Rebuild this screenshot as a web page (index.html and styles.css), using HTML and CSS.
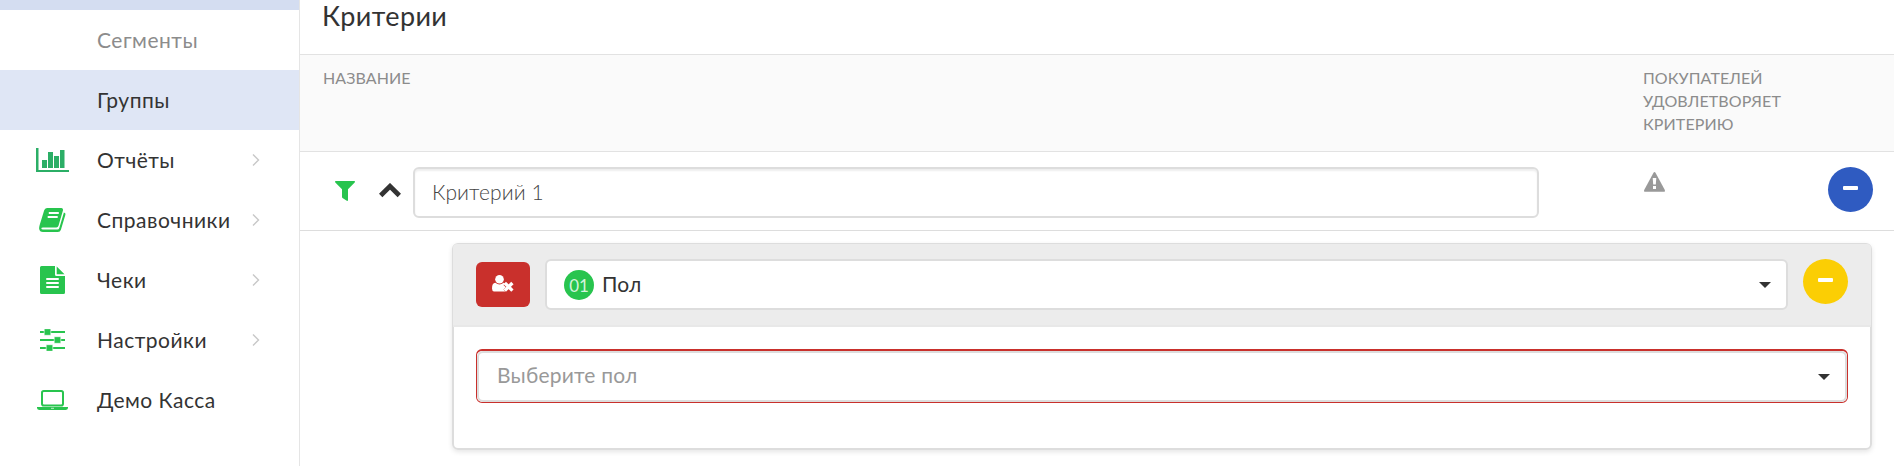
FILE: index.html
```html
<!DOCTYPE html>
<html lang="ru">
<head>
  <meta charset="UTF-8" />
  <meta name="viewport" content="width=device-width, initial-scale=1.0" />
  <title>Критерии</title>
  <link rel="stylesheet" href="styles.css">
</head>
<body>
  <nav class="sidebar">
    <div class="menu-top"></div>
    <a class="menu-item muted"><span class="label">Сегменты</span></a>
    <a class="menu-item active"><span class="label">Группы</span></a>
    <a class="menu-item">
      <svg class="icon" width="33" height="24" viewBox="0 0 33 24" fill="#2bae66"><path d="M0 0h2.500v22h30.500v2h-33zM6 12h5v8h-5zM12 4h5v16h-5zM18 8h5v12h-5zM24 2h4.500v18h-4.500z"/></svg>
      <span class="label">Отчёты</span>
      <svg class="arrow" width="8" height="12" viewBox="0 0 8 12"><path d="M1 .5l5.500 5.500-5.500 5.500"/></svg>
    </a>
    <a class="menu-item">
      <svg class="icon" width="27" height="24" viewBox="0 0 27 24"><path fill="#28c44e" d="M8 0h14.500q2 .2 1.500 2.200l-4.500 15.500q-.5 1.700-2.200 1.700H4q-1.800 0-1.700 1.200.2 1 1.700 1h14.500q1.300 0 1.800-1.500L24.900 4.500q2 .5 1.500 2.200l-4.500 15.100q-.7 2.200-3 2.200H4q-3.500 0-3.900-3.500 0-1.500.5-3.200L5.200 2.200Q5.800.2 8 0z"/><path stroke="#fff" stroke-width="1.800" d="M9.800 5h10M8.700 9h10"/></svg>
      <span class="label">Справочники</span>
      <svg class="arrow" width="8" height="12" viewBox="0 0 8 12"><path d="M1 .5l5.500 5.500-5.500 5.500"/></svg>
    </a>
    <a class="menu-item">
      <svg class="icon" width="25" height="28" viewBox="0 0 25 28"><path fill="#28c44e" d="M1.500 0H15v8.500q0 1.500 1.500 1.500H25v16.500q0 1.500-1.500 1.500h-22Q0 28 0 26.500v-25Q0 0 1.500 0zM16.700.5l7.800 7.800h-7.800z"/><path stroke="#fff" stroke-width="2" stroke-linecap="round" d="M7 13h11M7 17h11M7 21h11"/></svg>
      <span class="label">Чеки</span>
      <svg class="arrow" width="8" height="12" viewBox="0 0 8 12"><path d="M1 .5l5.500 5.500-5.500 5.500"/></svg>
    </a>
    <a class="menu-item">
      <svg class="icon" width="25" height="22" viewBox="0 0 25 22" fill="#28c44e"><path d="M0 2h25v2H0zM0 10h25v2H0zM0 18h25v2H0z"/><path stroke="#fff" stroke-width=".6" d="M4.200-.3h6.600v6.600h-6.600zM14.200 7.700h6.600v6.600h-6.600zM6.200 15.700h6.600v6.600h-6.600z"/></svg>
      <span class="label">Настройки</span>
      <svg class="arrow" width="8" height="12" viewBox="0 0 8 12"><path d="M1 .5l5.500 5.500-5.500 5.500"/></svg>
    </a>
    <a class="menu-item">
      <svg class="icon" width="31" height="20" viewBox="0 0 31 20"><rect x="5" y="1" width="21" height="14.500" rx="1.800" fill="none" stroke="#28c44e" stroke-width="2"/><path fill="#28c44e" d="M0 17h31v1q-.3 2-2.500 2h-26Q.3 20 0 18z"/><path stroke="#fff" stroke-width=".7" d="M14 18.300h3"/></svg>
      <span class="label">Демо Касса</span>
    </a>
  </nav>

  <main class="content">
    <h1>Критерии</h1>
    <div class="table-head">
      <div class="col-name">Название</div>
      <div class="col-count">Покупателей удовлетворяет критерию</div>
    </div>

    <div class="criterion">
      <svg class="filter" width="20" height="20" viewBox="0 0 20 20"><path fill="#28c44e" d="M.5 0h19q.8.500.2 1.500L13 8.200v11q-.3 1-1.200.6L7.500 17q-.5-.4-.5-1V8.200L.3 1.500Q-.2.500.5 0z"/></svg>
      <svg class="toggle" width="22" height="15" viewBox="0 0 22 15"><path fill="none" stroke="#333" stroke-width="4.800" d="M1.700 12.500L11 3.300l9.300 9.200"/></svg>
      <input class="field" type="text" value="Критерий 1">
      <div class="warning">
        <svg width="21" height="20" viewBox="0 0 21 20"><path fill="#999" d="M9.500.8q1-1.500 2 0l9.200 17q.8 2-.9 2H1.200q-1.700 0-.9-2z"/><path fill="#fff" d="M8.700 6h3.600l-.5 6.500H9.200zM9 14h3v3H9z"/></svg>
      </div>
      <button class="round blue"><span></span></button>
    </div>

    <section class="card">
      <div class="card-head">
        <button class="exclude">
          <svg width="22" height="17" viewBox="0 0 22 17"><path fill="#fff" d="M2 16.500Q0 16 0 13.500 0 8 3.300 7.800 5.500 9.500 7.500 9.500t4.200-1.700l1.300.5-1.500 1.600 2.300 2.300-2.300 2.300 1.800 2z"/><circle cx="7.500" cy="4.300" r="4.300" fill="#fff"/><path stroke="#fff" stroke-width="3.300" d="M12.800 8l7.600 7.600M20.400 8l-7.600 7.600"/></svg>
        </button>
        <div class="field select">
          <span class="badge">01</span>
          <span class="value">Пол</span>
          <i class="caret"></i>
        </div>
        <button class="round yellow"><span></span></button>
      </div>
      <div class="card-body">
        <div class="invalid">
          <div class="field select">
            <span class="placeholder">Выберите пол</span>
            <i class="caret"></i>
          </div>
        </div>
      </div>
    </section>
  </main>
</body>
</html>
```
FILE: styles.css
```css
* {
  box-sizing: border-box;
}
body {
  margin: 0;
  height: 466px;
  display: flex;
  overflow: hidden;
  background: #fff;
  color: #333;
  font-family: Lato, "Open Sans", sans-serif;
  font-size: 21px;
}
button {
  border: none;
  padding: 0;
  cursor: pointer;
}
.sidebar {
  width: 300px;
  flex: none;
  border-right: 1px solid #e5e5e5;
}
.menu-top {
  height: 10px;
  background: #d4ddf1;
}
.menu-item {
  height: 60px;
  display: grid;
  grid-template-columns: 105px 1fr 47px;
  align-items: center;
}
.menu-item .icon {
  grid-column: 1;
  justify-self: center;
}
.menu-item .label {
  grid-column: 2;
  margin-left: -8px;
  padding-bottom: 2px;
  letter-spacing: .5px;
  white-space: nowrap;
}
.arrow path {
  fill: none;
  stroke: #c8c8c8;
  stroke-width: 1.4;
}
.muted {
  color: #8c8c8c;
}
.active {
  background: #dfe6f5;
}
.content {
  flex: 1;
  min-width: 0;
}
h1 {
  margin: 0;
  height: 54px;
  padding-left: 22px;
  font-size: 27px;
  font-weight: 400;
  line-height: 31px;
  letter-spacing: .4px;
}
.table-head {
  height: 98px;
  padding: 11px 23px;
  display: flex;
  background: #fafafa;
  border-top: 1px solid #e2e2e2;
  border-bottom: 1px solid #e2e2e2;
  color: #8c8c8c;
  font-size: 16px;
  line-height: 23px;
  letter-spacing: .1px;
  text-transform: uppercase;
}
.col-name {
  width: 1320px;
  flex: none;
}
.col-count {
  width: 150px;
}
.criterion {
  height: 79px;
  padding: 15px 21px 0 35px;
  display: flex;
  align-items: flex-start;
  border-bottom: 1px solid #ddd;
}
.filter {
  margin-top: 14px;
}
.toggle {
  margin: 16px 12px 0 24px;
}
.field {
  height: 51px;
  border: 2px solid #ddd;
  border-radius: 6px;
  background: #fff;
  font: inherit;
  color: #333;
}
input.field {
  width: 1126px;
  padding: 0 17px 2px;
  font-weight: 300;
  letter-spacing: .1px;
  color: #444;
  box-shadow: inset 0 2px 2px #eee;
}
.warning {
  margin: 4px auto 0 105px;
}
.round {
  width: 45px;
  height: 45px;
  flex: none;
  border-radius: 50%;
  display: flex;
  justify-content: center;
  padding-top: 19px;
}
.round span {
  width: 15px;
  height: 4px;
  border-radius: 1px;
  background: #fff;
}
.blue {
  background: #2f5bc1;
}
.yellow {
  background: #fbce04;
}
.card {
  height: 207px;
  margin: 12px 22px 0 152px;
  border: 2px solid #ddd;
  border-radius: 6px;
  box-shadow: 0 2px 5px rgba(0, 0, 0, .1);
}
.card-head {
  height: 83px;
  margin: -1px;
  padding: 15px 23px 0;
  display: flex;
  background: #ececec;
  border-bottom: 2px solid #e8e8e8;
  border-radius: 4px 4px 0 0;
}
.exclude {
  width: 54px;
  height: 45px;
  margin: 3px 15px 0 0;
  border-radius: 6px;
  background: #c9302c;
}
.exclude svg {
  display: block;
  margin: 0 auto 2px;
}
.select {
  flex: 1;
  display: flex;
  align-items: center;
  padding: 0 15px 0 17px;
}
.card-head .round {
  margin-left: 15px;
}
.badge {
  width: 30px;
  height: 30px;
  margin-right: 8px;
  border-radius: 50%;
  background: #28c44e;
  color: #d4f3dc;
  font-size: 17px;
  line-height: 32px;
  text-align: center;
}
.value,
.placeholder {
  padding-bottom: 2px;
  letter-spacing: .2px;
}
.caret {
  margin-left: auto;
  border: 6px solid transparent;
  border-top-color: #333;
  border-bottom: 0;
}
.card-body {
  padding: 23px 22px 0;
}
.invalid {
  height: 54px;
  border: 1px solid #c9302c;
  border-top-width: 2px;
  border-radius: 6px;
}
.placeholder {
  margin-left: 1px;
  padding-bottom: 4px;
  color: #999;
}
```
